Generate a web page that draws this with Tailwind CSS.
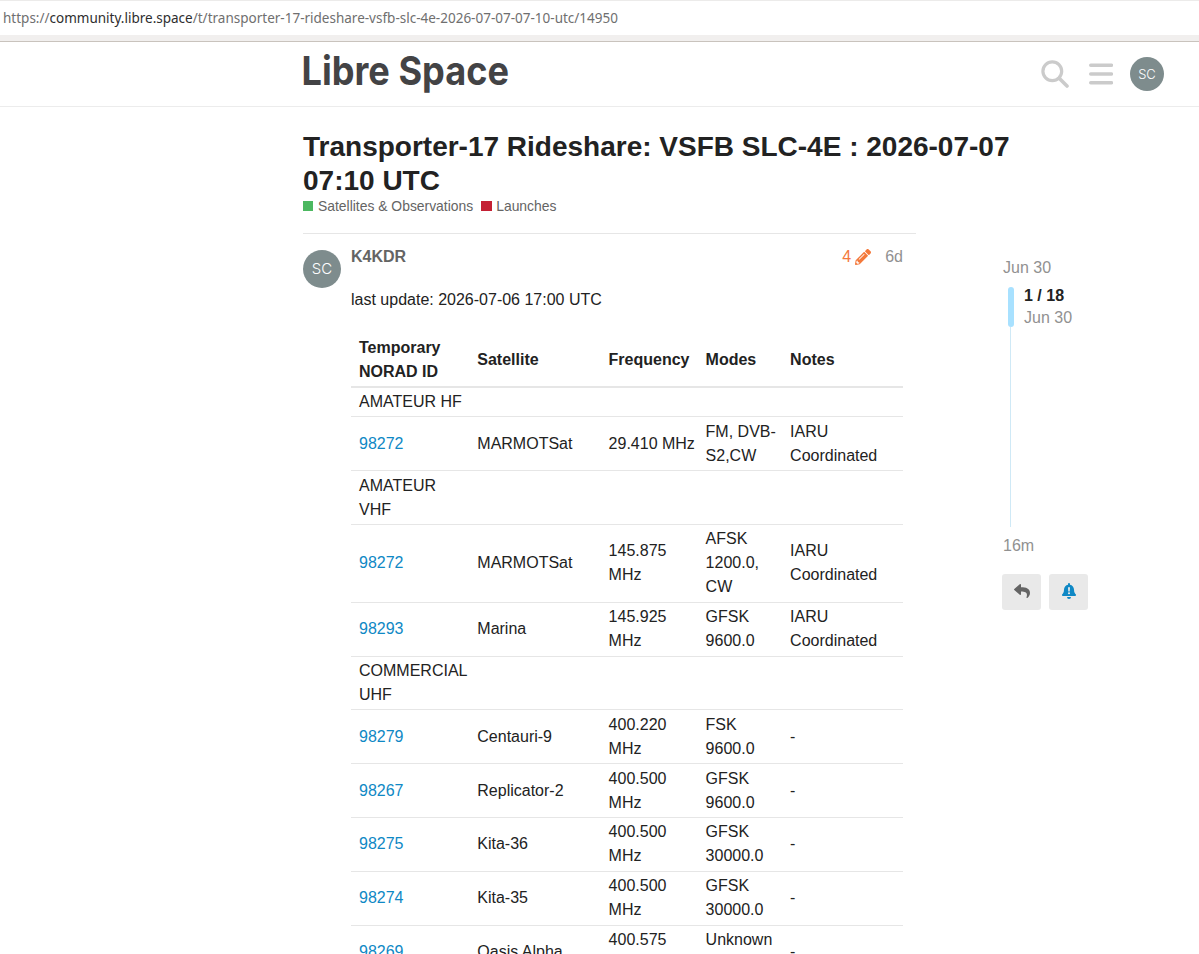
<!DOCTYPE html>
<html lang="en">
  <head>
    <meta charset="UTF-8" />
    <meta name="viewport" content="width=device-width, initial-scale=1.0" />
    <title>Transporter-17 Rideshare - Libre Space</title>
    <script src="https://cdn.jsdelivr.net/npm/@tailwindcss/browser@4"></script>
  </head>
  <body
    class="h-[954px] overflow-hidden bg-white font-['Liberation_Sans',Arial,sans-serif] text-base leading-6 text-[#222222]"
  >
    <!-- Address bar -->
    <div class="h-[42px] border-t border-b border-t-[#ecebea] border-b-[#c9c3bd] bg-[#f1efee]">
      <div class="flex h-[34px] items-center bg-white pl-[3px]">
        <svg class="block h-[34px] w-[640px] font-['Noto_Sans','Open_Sans',sans-serif] text-[14px]">
          <text x="0" y="22" textLength="615" lengthAdjust="spacingAndGlyphs" fill="#6f6f6f">https://<tspan fill="#2e2e2e">community.libre.space</tspan>/t/transporter-17-rideshare-vsfb-slc-4e-2026-07-07-07-10-utc/14950</text>
        </svg>
      </div>
    </div>

    <!-- Site header -->
    <header class="flex h-[65px] items-center border-b border-[#ececec] pr-[35px] pl-[302px]">
      <svg class="block h-[64px] w-[212px] overflow-visible font-['Inter',sans-serif] text-[40px] font-bold">
        <text x="-0.5" y="42.5" textLength="207.5" lengthAdjust="spacingAndGlyphs" fill="#434345">Libre Space</text>
      </svg>
      <div class="ml-auto flex items-center">
        <svg class="h-7 w-7" viewBox="0 0 28 28" fill="none" stroke="#cbcbcb">
          <circle cx="11.3" cy="11.3" r="9.4" stroke-width="3.2" />
          <path d="M18.2 18.2l7.800 7.800" stroke-width="3.6" stroke-linecap="round" />
        </svg>
        <svg class="ml-5 h-6 w-6" viewBox="0 0 24 24" stroke="#cbcbcb" stroke-width="3.4" stroke-linecap="round">
          <path d="M1.7 3.2h20.8M1.7 12h20.8M1.7 20.7h20.8" />
        </svg>
        <div
          class="ml-[17px] flex h-[34px] w-[34px] items-center justify-center rounded-full bg-[#7e8c8d] font-['Inter',sans-serif] text-[13px] font-light text-white"
        >
          SC
        </div>
      </div>
    </header>

    <main class="pl-[303px]">
      <h1 class="w-[740px] pt-[23px] text-[28px] leading-[33.6px] font-bold">
        Transporter-17 Rideshare: VSFB SLC-4E : 2026-07-07 07:10 UTC
      </h1>
      <div class="flex h-[18px] items-center text-[13.9px] text-[#646464]">
        <span class="mr-[5px] h-2.5 w-2.5 bg-[#4cb860]"></span>
        <span>Satellites &amp; Observations</span>
        <span class="mr-1 ml-2 h-2.5 w-[11px] bg-[#c42034]"></span>
        <span>Launches</span>
      </div>

      <div class="mt-[18px] flex">
        <article class="flex w-[613px] shrink-0 border-t border-[#e6e6e6] pt-4">
          <div
            class="flex h-[38px] w-[38px] shrink-0 items-center justify-center rounded-full bg-[#7e8c8d] font-['Inter',sans-serif] text-[15px] font-light text-white"
          >
            SC
          </div>
          <div class="ml-2.5 w-[552px]">
            <div class="-mt-[5px] flex h-6 items-center">
              <span class="font-bold text-[#646464]">K4KDR</span>
              <span class="ml-auto text-[#f4793b]">4</span>
              <svg class="ml-1 h-4 w-4" viewBox="0 0 512 512" fill="#f4793b">
                <path
                  d="M497.900 142.100l-46.100 46.100c-4.700 4.700-12.300 4.700-17 0l-111-111c-4.700-4.700-4.700-12.300 0-17l46.100-46.100c18.700-18.700 49.100-18.700 67.900 0l60.100 60.100c18.800 18.700 18.800 49.100 0 67.900zM284.200 99.800L21.600 362.400.4 483.900c-2.900 16.400 11.400 30.600 27.800 27.800l121.500-21.300 262.600-262.600c4.700-4.700 4.700-12.300 0-17l-111-111c-4.800-4.700-12.400-4.700-17.100 0zM124.100 339.900c-5.500-5.500-5.500-14.300 0-19.800l154-154c5.500-5.500 14.300-5.500 19.800 0s5.500 14.300 0 19.800l-154 154c-5.500 5.500-14.300 5.500-19.800 0zM88 424h48v36.300l-64.500 11.300-31.100-31.100L51.700 376H88v48z"
                />
              </svg>
              <span class="ml-3.5 text-[#919191]">6d</span>
            </div>
            <p class="mt-[19px]">last update: 2026-07-06 17:00 UTC</p>

            <!-- Frequency table -->
            <div class="mt-[21px]">
              <div
                class="grid h-[54.5px] grid-cols-[118.3px_131.3px_97px_84.500px_1fr] items-center border-b-2 border-[#e6e6e6] pt-[2px] pl-2 font-bold"
              >
                <div>Temporary<br />NORAD ID</div>
                <div>Satellite</div>
                <div>Frequency</div>
                <div>Modes</div>
                <div>Notes</div>
              </div>
              <div id="rows"></div>
            </div>
          </div>
        </article>

        <!-- Topic timeline -->
        <aside class="ml-[86px] w-[100px] pt-[23px] text-[#919191]">
          <div class="ml-px">Jun 30</div>
          <div class="mt-[7px] ml-1.5 flex h-10">
            <div class="w-1.5 rounded-full bg-[#a8e1ff]"></div>
            <div class="-mt-[2px] ml-2.5 leading-[22px]">
              <div class="font-bold text-[#222222]">1 / 18</div>
              <div>Jun 30</div>
            </div>
          </div>
          <div class="ml-2 h-[200px] w-px bg-[#cfe9f6]"></div>
          <div class="mt-[7px] ml-px">16m</div>
          <div class="mt-4 flex gap-2">
            <button class="flex h-9 w-[39px] items-center justify-center rounded-[3px] bg-[#e9e9e9]">
              <svg class="-mt-[2px] h-4 w-4" viewBox="0 0 512 512" fill="#646464">
                <path
                  d="M8.300 189.800L184.300 37.900C199.700 24.500 224 35.300 224 56v80.100C384.600 137.900 512 170.100 512 322.300c0 61.400-39.600 122.300-83.300 154.100-13.700 9.900-33.100-2.500-28.100-18.600 45.400-145-21.500-183.500-176.600-185.700V360c0 20.700-24.300 31.500-39.700 18.200l-176-152c-11.100-9.600-11.100-26.800 0-36.400z"
                />
              </svg>
            </button>
            <button class="flex h-9 w-[39px] items-center justify-center rounded-[3px] bg-[#e9e9e9]">
              <svg class="-mt-[2px] h-4 w-4" viewBox="0 0 512 512" fill="#0f88c5">
                <path
                  d="M471.400 362.300c-19.300-20.800-55.500-52-55.500-154.300 0-77.700-54.500-139.900-127.900-155.200V32a32 32 0 0 0-64 0v20.800C150.600 68.100 96.100 130.300 96.100 208c0 102.300-36.200 133.500-55.500 154.300A31.300 31.300 0 0 0 32 384c.1 16.400 13 32 32.100 32h383.800c19.100 0 32-15.600 32.100-32 0-7.900-2.900-15.700-8.600-21.700zM256 512a64 64 0 0 0 64-64H192a64 64 0 0 0 64 64z"
                />
                <path d="M224 136h64l-10 136h-44z" fill="#e9e9e9" />
                <circle cx="256" cy="328" r="34" fill="#e9e9e9" />
              </svg>
            </button>
          </div>
        </aside>
      </div>
    </main>

    <script>
      const entries = [
        ["AMATEUR HF"],
        ["98272", "MARMOTSat", "29.410 MHz", "FM, DVB-<br>S2,CW", "IARU<br>Coordinated"],
        ["AMATEUR<br>VHF"],
        ["98272", "MARMOTSat", "145.875<br>MHz", "AFSK<br>1200.0,<br>CW", "IARU<br>Coordinated"],
        ["98293", "Marina", "145.925<br>MHz", "GFSK<br>9600.0", "IARU<br>Coordinated"],
        ["COMMERCIAL<br>UHF"],
        ["98279", "Centauri-9", "400.220<br>MHz", "FSK<br>9600.0", "-"],
        ["98267", "Replicator-2", "400.500<br>MHz", "GFSK<br>9600.0", "-"],
        ["98275", "Kita-36", "400.500<br>MHz", "GFSK<br>30000.0", "-"],
        ["98274", "Kita-35", "400.500<br>MHz", "GFSK<br>30000.0", "-"],
        ["98269", "Oasis Alpha", "400.575<br>MHz", "Unknown<br>-", "-"],
      ];

      document.getElementById("rows").innerHTML = entries
        .map((entry) => {
          const cells = entry
            .map((cell, i) =>
              i === 0 && entry.length > 1
                ? `<a class="text-[#0f88c5]">${cell}</a>`
                : `<div class="whitespace-nowrap">${cell}</div>`
            )
            .join("");
          return `<div class="grid grid-cols-[118.3px_131.3px_97px_84.500px_1fr] items-center border-b border-[#e6e6e6] py-[2.4px] pl-2">${cells}</div>`;
        })
        .join("\n");
    </script>
  </body>
</html>
